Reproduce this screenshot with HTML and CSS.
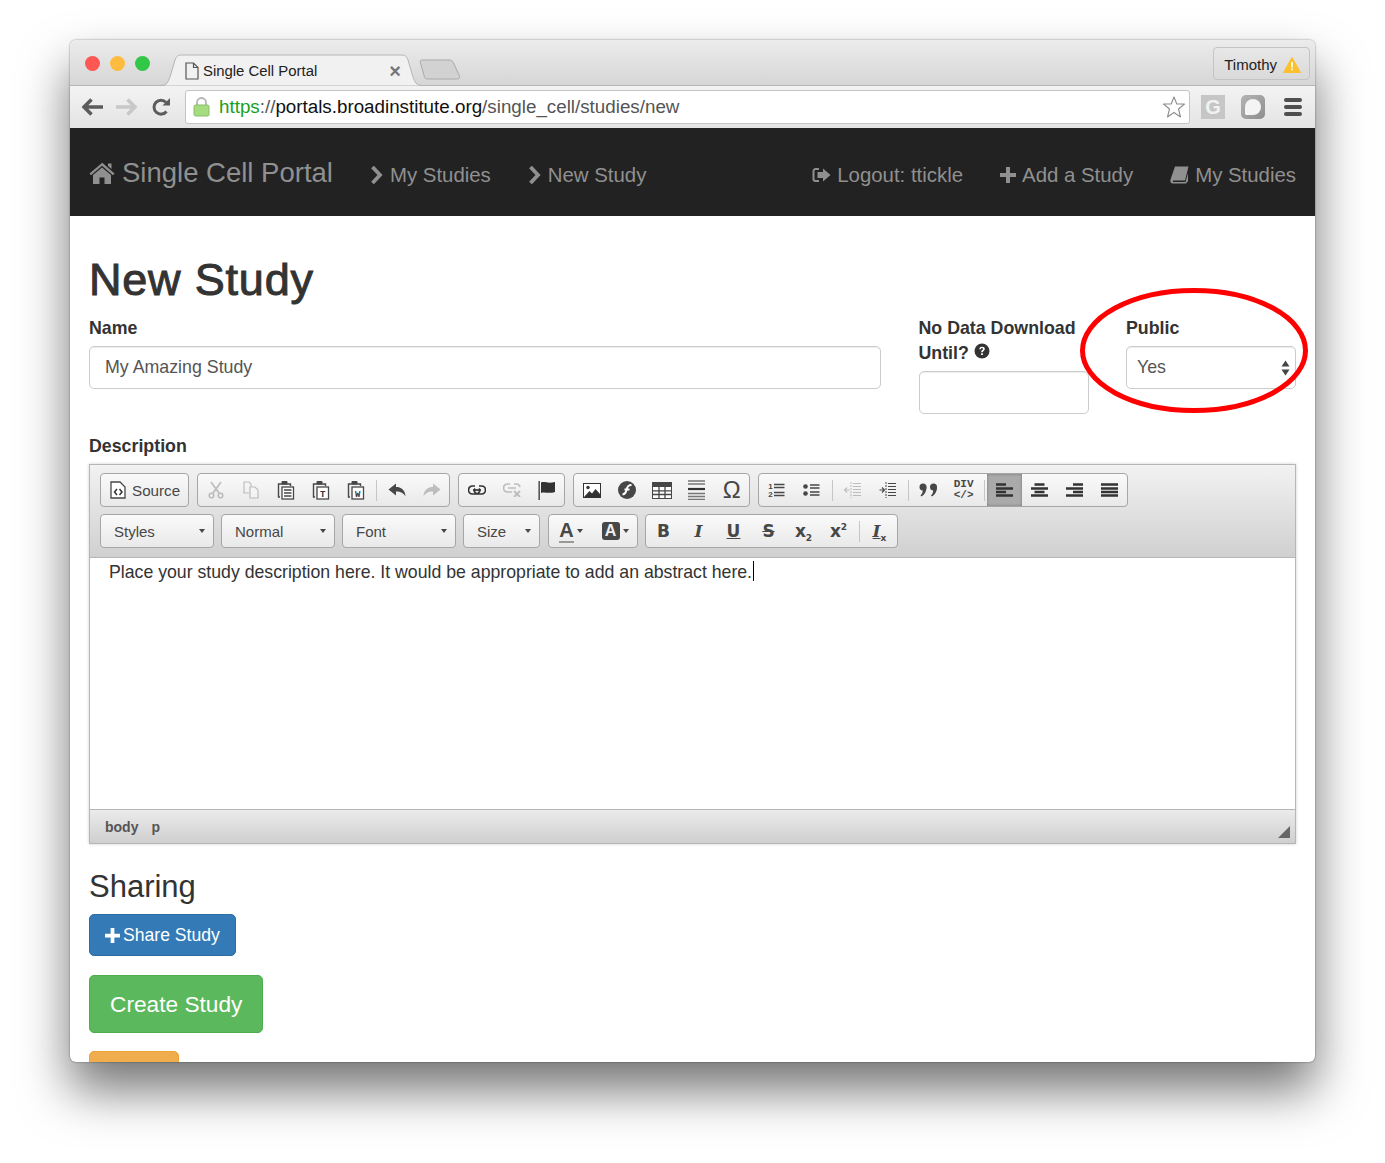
FILE: index.html
```html
<!DOCTYPE html>
<html lang="en">
<head>
    <meta charset="UTF-8">
    <title>Single Cell Portal</title>
    <link rel="stylesheet" href="styles.css">
</head>
<body>
<div class="window">
    <!-- browser chrome -->
    <div class="tabstrip">
        <div class="lights">
            <span class="light red"></span>
            <span class="light yellow"></span>
            <span class="light green"></span>
        </div>
        <div class="tab">
            <svg class="tab-shape" width="262" height="32" viewBox="0 0 262 32"><path d="M0 31.500C6 31.500 7 28 9 23L14 6C15.500 2 17 1 21 1H240C244 1 245.500 2 247 6L252 23C254 28 255 31.500 262 31.500" fill="#f1f1f1" stroke="#b4b4b4"/></svg>
            <svg class="tab-doc" width="14" height="18" viewBox="0 0 14 18"><path d="M1 1H8.500L13 5.500V17H1ZM8.500 1V5.500H13" fill="none" stroke="#555" stroke-width="1.200"/></svg>
            <span class="tab-title">Single Cell Portal</span>
            <span class="tab-close">×</span>
        </div>
        <svg class="newtab" width="42" height="21" viewBox="0 0 42 21"><path d="M1 2.500C1 1.500 2 1 3 1H30C32 1 33 1.500 34 3L40.500 17C41 19 40 20 38 20H9C7 20 6 19.500 5.500 18Z" fill="#d2d2d2" stroke="#aaa"/></svg>
        <div class="profile">Timothy
            <svg width="18" height="16" viewBox="0 0 18 16"><path d="M9 0.500L17.500 15.500H0.500Z" fill="#fbc02d" stroke="#fbc02d" stroke-linejoin="round"/><rect x="8.200" y="5" width="1.600" height="5.500" fill="#fff"/><rect x="8.200" y="11.500" width="1.600" height="1.800" fill="#fff"/></svg>
        </div>
    </div>
    <div class="urlbar">
        <svg class="nav-ico" width="22" height="18" viewBox="0 0 22 18"><path d="M9.500 1.500L2 9L9.500 16.500M2.500 9H21" fill="none" stroke="#5c5c5c" stroke-width="3.600"/></svg>
        <svg class="nav-ico fwd" width="22" height="18" viewBox="0 0 22 18"><path d="M12.500 1.500L20 9L12.500 16.500M19.500 9H1" fill="none" stroke="#c8c8c8" stroke-width="3.600"/></svg>
        <svg class="nav-ico reload" width="20" height="20" viewBox="0 0 20 20"><path d="M15.500 14.500A7 7 0 1 1 15 5.200" fill="none" stroke="#5c5c5c" stroke-width="3"/><path d="M11.500 8.500H19V1Z" fill="#5c5c5c"/></svg>
        <div class="omnibox">
            <svg width="17" height="20" viewBox="0 0 17 20"><path d="M4 9V5.500A4.500 4.500 0 0 1 13 5.500V9" fill="none" stroke="#b5b5b5" stroke-width="1.800"/><rect x="1" y="8" width="15" height="11" rx="1.500" fill="#a5dc7f" stroke="#8cbc6a"/></svg>
            <span class="url"><span class="url-green">https</span><span class="url-grey">://</span>portals.broadinstitute.org<span class="url-grey">/single_cell/studies/new</span></span>
            <svg class="star" width="24" height="24" viewBox="0 0 24 24"><path d="M12 2L14.800 9H22.500L16.500 14L18.500 22L12 17.500L5.500 22L7.500 14L1.500 9H9.200Z" fill="#fff" stroke="#8e8e8e" stroke-width="1.100" stroke-linejoin="round"/></svg>
        </div>
        <div class="ext-g">G</div>
        <div class="ext-round"><span></span></div>
        <div class="burger"><i></i><i></i><i></i></div>
    </div>

    <!-- site nav -->
    <nav class="navbar">
        <a class="brand">
            <svg width="26" height="22" viewBox="0 0 26 22"><path d="M13 0.500L25.500 11.500L24 13.300L13 3.800L2 13.300L0.500 11.500L13 1V0.500ZM19 1.500H22.500V7L19 4Z" fill="#909090"/><path d="M13 5.500L22 13V22H15.500V15.500H10.500V22H4V13Z" fill="#909090"/></svg>
            Single Cell Portal
        </a>
        <a class="nav-link crumb"><svg width="13" height="20" viewBox="0 0 13 20"><path d="M2.500 2L10 10L2.500 18" fill="none" stroke="#909090" stroke-width="3.800"/></svg>My Studies</a>
        <a class="nav-link crumb"><svg width="13" height="20" viewBox="0 0 13 20"><path d="M2.500 2L10 10L2.500 18" fill="none" stroke="#909090" stroke-width="3.800"/></svg>New Study</a>
        <div class="nav-right">
            <a class="nav-link"><svg width="19" height="16" viewBox="0 0 19 16"><path d="M7 2H3.500A2 2 0 0 0 1.500 4V12A2 2 0 0 0 3.500 14H7" fill="none" stroke="#909090" stroke-width="2"/><path d="M11 1.500L18.500 8L11 14.500V11H5.500V5H11Z" fill="#909090"/></svg>Logout: ttickle</a>
            <a class="nav-link"><svg width="16" height="16" viewBox="0 0 16 16"><path d="M6 0H10V6H16V10H10V16H6V10H0V6H6Z" fill="#909090"/></svg>Add a Study</a>
            <a class="nav-link"><svg width="19" height="18" viewBox="0 0 19 18"><path d="M5 0.500H18.500L15 14.500H3.500C2.500 14.500 2.500 16 3.500 16H15.500L18 7V15L16 17.500H3C0.500 17.500 0 15.500 0.500 13.500Z" fill="#909090"/></svg>My Studies</a>
        </div>
    </nav>

    <!-- page -->
    <main class="content">
        <h1>New Study</h1>
        <div class="form-row">
            <div class="field">
                <label>Name</label>
                <input type="text" value="My Amazing Study">
            </div>
            <div class="field">
                <label>No Data Download Until? <svg width="16" height="16" viewBox="0 0 16 16"><circle cx="8" cy="8" r="7.500" fill="#333"/><path d="M5.300 6.200C5.300 4.500 6.500 3.700 8 3.700C9.700 3.700 10.800 4.600 10.800 6C10.800 7.800 8.800 7.800 8.800 9.300H7.100C7.100 7.100 9 7.200 9 6C9 5.400 8.600 5.100 8 5.100C7.400 5.100 7 5.500 7 6.200ZM7.100 10.200H8.900V12.100H7.100Z" fill="#fff"/></svg></label>
                <input type="text">
            </div>
            <div class="field">
                <label>Public</label>
                <div class="select">Yes
                    <svg width="9" height="16" viewBox="0 0 9 16"><path d="M4.500 0.500L8.500 6.500H0.500ZM4.500 15.500L0.500 9.500H8.500Z" fill="#444"/></svg>
                </div>
            </div>
        </div>

        <label class="desc-label">Description</label>
        <div class="editor">
            <div class="ck-top">
                <div class="ck-row">
                    <div class="ck-group">
                        <div class="ck-btn ck-source">
                            <svg width="16" height="18" viewBox="0 0 16 18"><path d="M1 1H10L15 6V17H1Z" fill="#fff" stroke="#474747" stroke-width="1.300"/><path d="M7 8L4.500 11L7 14M9.500 8L12 11L9.500 14" fill="none" stroke="#333" stroke-width="1.500"/></svg>
                            Source
                        </div>
                    </div>
                    <div class="ck-group">
                        <div class="ck-btn off"><svg width="18" height="18" viewBox="0 0 18 18"><path d="M4 1L12 12M14 1L6 12" stroke="#474747" stroke-width="1.800" fill="none"/><circle cx="4.500" cy="14.500" r="2.300" fill="none" stroke="#474747" stroke-width="1.500"/><circle cx="13.500" cy="14.500" r="2.300" fill="none" stroke="#474747" stroke-width="1.500"/></svg></div>
                        <div class="ck-btn off"><svg width="18" height="18" viewBox="0 0 18 18"><path d="M7 12H2V1H7L9 3V6" fill="none" stroke="#474747" stroke-width="1.200"/><path d="M8 6H13L16 9V17H8Z" fill="#fff" stroke="#474747" stroke-width="1.200"/></svg></div>
                        <div class="ck-btn"><svg width="18" height="20" viewBox="0 0 18 20"><path d="M3 17H1.500V4H13.500V6" fill="none" stroke="#474747" stroke-width="1.400"/><rect x="4.500" y="1" width="6" height="3.500" rx="1" fill="#474747"/><rect x="5" y="7" width="11.500" height="12" fill="#fff" stroke="#474747" stroke-width="1.300"/><path d="M7 10H14.500M7 13H14.500M7 16H14.500" stroke="#474747" stroke-width="1.300"/></svg></div>
                        <div class="ck-btn"><svg width="18" height="20" viewBox="0 0 18 20"><path d="M3 17H1.500V4H13.500V6" fill="none" stroke="#474747" stroke-width="1.400"/><rect x="4.500" y="1" width="6" height="3.500" rx="1" fill="#474747"/><rect x="5" y="7" width="11.500" height="12" fill="#fff" stroke="#474747" stroke-width="1.300"/><text x="10.700" y="17" class="ico-text">T</text></svg></div>
                        <div class="ck-btn"><svg width="18" height="20" viewBox="0 0 18 20"><path d="M3 17H1.500V4H13.500V6" fill="none" stroke="#474747" stroke-width="1.400"/><rect x="4.500" y="1" width="6" height="3.500" rx="1" fill="#474747"/><rect x="5" y="7" width="11.500" height="12" fill="#fff" stroke="#474747" stroke-width="1.300"/><text x="10.700" y="17" class="ico-text">W</text></svg></div>
                        <span class="ck-sep"></span>
                        <div class="ck-btn"><svg width="18" height="14" viewBox="0 0 18 14"><path d="M8 0.500V4C13 4 17 6.500 17.500 13.500C15.500 10 13 8.500 8 8.500V12.500L0.500 6.500Z" fill="#474747"/></svg></div>
                        <div class="ck-btn off"><svg width="18" height="14" viewBox="0 0 18 14"><path d="M10 0.500V4C5 4 1 6.500 0.500 13.500C2.500 10 5 8.500 10 8.500V12.500L17.500 6.500Z" fill="#474747"/></svg></div>
                    </div>
                    <div class="ck-group">
                        <div class="ck-btn"><svg width="18" height="10" viewBox="0 0 18 10"><path d="M7 1H4.500A4 4 0 0 0 4.500 9H8.500A3.500 3.500 0 0 0 11 3.500M11 1H13.500A4 4 0 0 1 13.500 9H9.500A3.500 3.500 0 0 1 7 3.500" fill="none" stroke="#333" stroke-width="1.700"/><path d="M5 5H13" stroke="#333" stroke-width="1.700"/></svg></div>
                        <div class="ck-btn off"><svg width="18" height="14" viewBox="0 0 18 14"><path d="M7 1H4.500A4 4 0 0 0 4.500 9H9M11 1H13.500A4 4 0 0 1 17 4M5 5H13" fill="none" stroke="#474747" stroke-width="1.700"/><path d="M11 8L17 14M17 8L11 14" stroke="#474747" stroke-width="1.800"/></svg></div>
                        <div class="ck-btn"><svg width="18" height="19" viewBox="0 0 18 19"><rect x="0.500" y="0" width="1.300" height="19" fill="#333"/><path d="M3 1.500C7 0 9.500 3 17 1V11C10 13 7 10.500 3 12Z" fill="#333"/></svg></div>
                    </div>
                    <div class="ck-group">
                        <div class="ck-btn"><svg width="18" height="15" viewBox="0 0 18 15"><rect x="0.500" y="0.500" width="17" height="14" fill="#fff" stroke="#333"/><circle cx="5" cy="4.500" r="1.700" fill="#333"/><path d="M1 14L6.500 8L9 10.500L12.500 6L17 11V14Z" fill="#333"/></svg></div>
                        <div class="ck-btn"><svg width="18" height="18" viewBox="0 0 18 18"><circle cx="9" cy="9" r="9" fill="#474747"/><path d="M13.500 4C9.500 4 9 6.500 8.500 9C8 11.500 7.500 13 4.500 13.500M6.500 8.500H11.500" fill="none" stroke="#fff" stroke-width="2"/></svg></div>
                        <div class="ck-btn"><svg width="20" height="17" viewBox="0 0 20 17"><rect width="20" height="17" fill="#474747"/><path d="M1 5H19V16H1Z" fill="#fff"/><path d="M7 5V17M13 5V17M0 8.800H20M0 12.500H20" stroke="#474747" stroke-width="1.300"/></svg></div>
                        <div class="ck-btn"><svg width="17" height="20" viewBox="0 0 17 20"><path d="M0 1H17M0 4H17M0 13.500H17M0 16.500H17M0 19.500H17" stroke="#777" stroke-width="1.300"/><path d="M0 9H17" stroke="#333" stroke-width="2.200"/></svg></div>
                        <div class="ck-btn ck-omega">Ω</div>
                    </div>
                    <div class="ck-group">
                        <div class="ck-btn"><svg width="17" height="16" viewBox="0 0 17 16"><text x="2.500" y="7" class="ico-num">1</text><text x="2.500" y="15" class="ico-num">2</text><path d="M6 2.500H16.500M6 5.500H16.500M6 10.500H16.500M6 13.500H16.500" stroke="#474747" stroke-width="1.400"/></svg></div>
                        <div class="ck-btn"><svg width="17" height="14" viewBox="0 0 17 14"><circle cx="2.500" cy="3.500" r="2.300" fill="#474747"/><circle cx="2.500" cy="10.500" r="2.300" fill="#474747"/><path d="M7 2H16.500M7 5H16.500M7 9H16.500M7 12H16.500" stroke="#474747" stroke-width="1.400"/></svg></div>
                        <span class="ck-sep"></span>
                        <div class="ck-btn off"><svg width="18" height="16" viewBox="0 0 18 16"><path d="M7 0V16" stroke="#474747" stroke-dasharray="2 1"/><path d="M9 1.500H17M9 4.500H17M9 7.500H17M9 10.500H17M9 13.500H17" stroke="#474747" stroke-width="1.100"/><path d="M5.500 8H0.500M3 5.500L0.500 8L3 10.500" fill="none" stroke="#474747" stroke-width="1.100"/></svg></div>
                        <div class="ck-btn"><svg width="18" height="16" viewBox="0 0 18 16"><path d="M7 0V16" stroke="#474747" stroke-dasharray="2 1"/><path d="M9 1.500H17M9 4.500H17M9 7.500H17M9 10.500H17M9 13.500H17" stroke="#474747" stroke-width="1.100"/><path d="M0.500 8H5.500M3 5.500L5.500 8L3 10.500" fill="none" stroke="#474747" stroke-width="1.100"/></svg></div>
                        <span class="ck-sep"></span>
                        <div class="ck-btn"><svg width="19" height="14" viewBox="0 0 19 14"><circle cx="4" cy="4" r="3.500" fill="#474747"/><path d="M7.500 4C7.500 8 6 11.500 2.500 13.500L1.500 12.500C3.500 10.500 4 8.500 3.500 6Z" fill="#474747"/><circle cx="14.500" cy="4" r="3.500" fill="#474747"/><path d="M18 4C18 8 16.500 11.500 13 13.500L12 12.500C14 10.500 14.500 8.500 14 6Z" fill="#474747"/></svg></div>
                        <div class="ck-btn ck-div"><span>DIV</span><span>&lt;/&gt;</span></div>
                        <span class="ck-sep"></span>
                        <div class="ck-btn active"><svg width="17" height="14" viewBox="0 0 17 14"><path d="M0 1.500H10M0 5.500H17M0 9H10M0 12.500H17" stroke="#333" stroke-width="2.500"/></svg></div>
                        <div class="ck-btn"><svg width="17" height="14" viewBox="0 0 17 14"><path d="M3.500 1.500H13.500M0 5.500H17M3.500 9H13.500M0 12.500H17" stroke="#333" stroke-width="2.500"/></svg></div>
                        <div class="ck-btn"><svg width="17" height="14" viewBox="0 0 17 14"><path d="M7 1.500H17M0 5.500H17M7 9H17M0 12.500H17" stroke="#333" stroke-width="2.500"/></svg></div>
                        <div class="ck-btn"><svg width="17" height="14" viewBox="0 0 17 14"><path d="M0 1.500H17M0 5.500H17M0 9H17M0 12.500H17" stroke="#333" stroke-width="2.500"/></svg></div>
                    </div>
                </div>
                <div class="ck-row row-two">
                    <div class="ck-group ck-combo w-styles">Styles<i class="caret"></i></div>
                    <div class="ck-group ck-combo w-styles">Normal<i class="caret"></i></div>
                    <div class="ck-group ck-combo w-styles">Font<i class="caret"></i></div>
                    <div class="ck-group ck-combo w-size">Size<i class="caret"></i></div>
                    <div class="ck-group ck-colors">
                        <div class="ck-btn ck-color"><span class="ck-a">A</span><i class="caret"></i></div>
                        <div class="ck-btn ck-color"><span class="ck-a-bg">A</span><i class="caret"></i></div>
                    </div>
                    <div class="ck-group">
                        <div class="ck-btn ck-glyph"><b>B</b></div>
                        <div class="ck-btn ck-glyph"><b class="slab">I</b></div>
                        <div class="ck-btn ck-glyph ck-u"><b>U</b></div>
                        <div class="ck-btn ck-glyph ck-s"><b>S</b></div>
                        <div class="ck-btn ck-glyph"><b>x<sub>2</sub></b></div>
                        <div class="ck-btn ck-glyph"><b>x<sup>2</sup></b></div>
                        <span class="ck-sep"></span>
                        <div class="ck-btn ck-glyph"><b class="slab ck-u">I</b><b><sub>x</sub></b></div>
                    </div>
                </div>
            </div>
            <div class="ck-body">Place your study description here. It would be appropriate to add an abstract here.<span class="cursor"></span></div>
            <div class="ck-bottom">
                <span>body</span><span>p</span>
                <i class="resizer"></i>
            </div>
        </div>

        <h3>Sharing</h3>
        <a class="btn btn-share"><svg width="15" height="15" viewBox="0 0 16 16"><path d="M6 0H10V6H16V10H10V16H6V10H0V6H6Z" fill="#fff"/></svg> Share Study</a>
        <a class="btn btn-create">Create Study</a>
        <a class="btn btn-orange"></a>
    </main>

    <!-- annotation on top of the select -->
    <svg class="circle" width="232" height="131" viewBox="0 0 232 131"><ellipse cx="116" cy="65.500" rx="111.500" ry="60" fill="none" stroke="#f00" stroke-width="5"/></svg>
</div>
</body>
</html>
```

FILE: styles.css
```css
* {
    box-sizing: border-box;
}
html, body {
    margin: 0;
    height: 1163px;
    overflow: hidden;
    background: #fff;
}
body {
    padding: 40px 0 0 70px;
    font-family: "Liberation Sans", Arial, sans-serif;
    color: #333;
}
.window {
    position: relative;
    width: 1245px;
    height: 1022px;
    background: #fff;
    border-radius: 6px;
    box-shadow: 0 28px 50px rgba(0, 0, 0, 0.55), 0 0 2px rgba(0, 0, 0, 0.5);
}

/* browser chrome */
.tabstrip {
    display: flex;
    align-items: flex-end;
    height: 46px;
    padding-left: 15px;
    background: linear-gradient(#ececec, #d6d6d6);
    border-bottom: 1px solid #b4b4b4;
    border-radius: 6px 6px 0 0;
}
.lights {
    display: flex;
    gap: 10px;
    align-self: flex-start;
    margin-top: 16px;
}
.light {
    width: 15px;
    height: 15px;
    border-radius: 50%;
}
.red { background: #fc5753; }
.yellow { background: #fdbc40; }
.green { background: #33c748; }
.tab {
    position: relative;
    display: flex;
    align-items: center;
    width: 262px;
    height: 32px;
    margin: 0 0 -1px 11px;
    padding: 2px 22px 0 24px;
}
.tab-shape {
    position: absolute;
    left: 0;
    top: 0;
}
.tab-doc, .tab-title, .tab-close {
    position: relative;
}
.tab-title {
    margin-left: 4px;
    font-size: 14.900px;
    color: #222;
}
.tab-close {
    margin-left: auto;
    font-size: 20px;
    font-weight: bold;
    color: #777;
}
.newtab {
    margin: 0 0 5px -4px;
}
.profile {
    display: flex;
    align-items: center;
    gap: 6px;
    align-self: flex-start;
    height: 33px;
    margin: 7px 5px 0 auto;
    padding: 2px 8px 0 10px;
    font-size: 15px;
    color: #222;
    border: 1px solid #c4c4c4;
    border-radius: 4px;
}
.urlbar {
    display: flex;
    align-items: center;
    height: 42px;
    padding-left: 12px;
    background: linear-gradient(#f3f3f3, #e4e4e4);
}
.nav-ico {
    flex: none;
}
.fwd {
    margin-left: 11px;
}
.reload {
    margin-left: 14px;
}
.omnibox {
    display: flex;
    align-items: center;
    width: 1005px;
    height: 34px;
    margin-left: 14px;
    padding: 0 3px 0 7px;
    background: #fff;
    border: 1px solid #c4c4c4;
    border-radius: 3px;
}
.url {
    margin-left: 9px;
    font-size: 18.800px;
    color: #111;
    white-space: nowrap;
}
.url-green { color: #17a11c; }
.url-grey { color: #555; }
.star {
    margin-left: auto;
}
.ext-g {
    display: flex;
    align-items: center;
    justify-content: center;
    width: 24px;
    height: 24px;
    margin-left: 11px;
    background: #c6c6c6;
    color: #f2f2f2;
    font-size: 20px;
    font-weight: bold;
}
.ext-round {
    width: 24px;
    height: 24px;
    margin-left: 16px;
    padding: 4px;
    background: linear-gradient(135deg, #b4b4b4, #8e8e8e);
    border-radius: 5px;
}
.ext-round span {
    display: block;
    width: 16px;
    height: 16px;
    background: #f4f4f4;
    border-radius: 50% 50% 50% 10%;
}
.burger {
    display: flex;
    flex-direction: column;
    gap: 3px;
    margin-left: 19px;
}
.burger i {
    display: block;
    width: 18px;
    height: 4px;
    background: #4f4f4f;
    border-radius: 2px;
}

/* site nav */
.navbar {
    display: flex;
    align-items: center;
    height: 88px;
    padding: 6px 19px 0;
    background: #222;
    color: #909090;
}
.brand {
    display: flex;
    align-items: center;
    gap: 7px;
    font-size: 27.500px;
    margin-top: -4px;
}
.nav-link {
    display: flex;
    align-items: center;
    gap: 6px;
    font-size: 20.400px;
}
.crumb {
    margin-left: 37px;
    gap: 7px;
}
.nav-right {
    display: flex;
    gap: 37px;
    margin-left: auto;
}

/* page */
.content {
    padding: 36px 19px 0;
    height: 846px;
    overflow: hidden;
}
h1 {
    margin: 0 0 8px;
    font-size: 45px;
    line-height: 56px;
    font-weight: normal;
    letter-spacing: 0.800px;
    -webkit-text-stroke: 1px #333;
    color: #333;
}
h3 {
    margin: 26px 0 10px;
    font-size: 31px;
    line-height: 34px;
    font-weight: normal;
}
label {
    display: block;
    font-size: 17.800px;
    font-weight: bold;
    line-height: 25px;
    margin-bottom: 5px;
}
.form-row {
    display: grid;
    grid-template-columns: 792px 170px 170px;
    column-gap: 37.500px;
}
input, .select {
    display: block;
    width: 100%;
    height: 43px;
    padding: 0 15px;
    font: 17.800px "Liberation Sans", Arial, sans-serif;
    color: #555;
    background: #fff;
    border: 1px solid #ccc;
    border-radius: 5px;
    box-shadow: inset 0 1px 1px rgba(0, 0, 0, 0.075);
}
.select {
    display: flex;
    align-items: center;
    justify-content: space-between;
    padding: 0 5px 0 10px;
}
.desc-label {
    margin: 20px 0 5px;
}

/* editor toolbar */
.editor {
    height: 380px;
    border: 1px solid #b6b6b6;
    box-shadow: 0 0 3px rgba(0, 0, 0, 0.2);
}
.ck-top {
    height: 93px;
    padding: 8px 10px 0;
    background: linear-gradient(#f2f2f2, #d0d0d0);
    border-bottom: 1px solid #b6b6b6;
}
.ck-row {
    display: flex;
    gap: 8px;
    height: 34px;
    margin-bottom: 7px;
}
.row-two {
    gap: 7px;
}
.ck-colors {
    margin-left: 1px;
}
.ck-group {
    display: flex;
    align-items: stretch;
    height: 34px;
    background: linear-gradient(#fafafa, #e9e9e9);
    border: 1px solid #a6a6a6;
    border-radius: 4px;
}
.ck-btn {
    display: flex;
    align-items: center;
    justify-content: center;
    width: 35px;
    font-size: 15px;
    color: #474747;
}
.ck-btn.off svg {
    opacity: 0.3;
}
.ck-btn.active {
    background: #aaa;
    box-shadow: inset 0 0 3px #777;
}
.ck-sep {
    width: 1px;
    margin: 6px 2.500px 5px;
    background: #c6c6c6;
}
.ck-source {
    width: auto;
    gap: 6px;
    padding: 0 8px 0 9px;
    font-size: 15.200px;
}
.ico-text {
    font: bold 9px "Liberation Mono", monospace;
    text-anchor: middle;
    fill: #333;
}
.ico-num {
    font: bold 8px "Liberation Sans", sans-serif;
    text-anchor: middle;
    fill: #474747;
}
.ck-glyph {
    font-family: "DejaVu Sans", sans-serif;
    font-size: 17px;
}
.ck-glyph sub, .ck-glyph sup {
    font-size: 9px;
    line-height: 0;
}
.slab {
    font-family: "DejaVu Serif", serif;
    font-style: italic;
}
.ck-omega {
    font-size: 24px;
}
.ck-u {
    text-decoration: underline;
}
.ck-s {
    text-decoration: line-through;
}
.ck-div {
    flex-direction: column;
    font: bold 11px/11px "Liberation Mono", monospace;
}
.ck-combo {
    justify-content: space-between;
    align-items: center;
    padding: 0 8px 0 13px;
    font-size: 15px;
    color: #474747;
}
.w-styles { width: 114px; }
.w-size { width: 77px; }
.caret {
    display: block;
    width: 0;
    height: 0;
    border: 3.500px solid transparent;
    border-top: 4px solid #474747;
    border-bottom: 0;
}
.ck-color {
    width: 44px;
    gap: 3px;
}
.ck-a {
    font-size: 20px;
    font-weight: bold;
    line-height: 22px;
    border-bottom: 2px solid #999;
}
.ck-a-bg {
    width: 18px;
    font-size: 16px;
    font-weight: bold;
    line-height: 18px;
    text-align: center;
    color: #eee;
    background: #474747;
    border-radius: 3px;
}
.ck-body {
    height: 251px;
    padding: 3px 19px;
    font-size: 17.700px;
    line-height: 22px;
    color: #333;
    background: #fff;
}
.cursor {
    display: inline-block;
    width: 1px;
    height: 20px;
    margin-left: 1px;
    vertical-align: -3px;
    background: #000;
}
.ck-bottom {
    position: relative;
    display: flex;
    align-items: center;
    gap: 13px;
    height: 34px;
    padding-left: 15px;
    font-size: 14px;
    font-weight: bold;
    color: #555;
    background: linear-gradient(#ebebeb, #cfcfcf);
    border-top: 1px solid #b6b6b6;
}
.resizer {
    position: absolute;
    right: 5px;
    bottom: 5px;
    border-left: 12px solid transparent;
    border-bottom: 12px solid #666;
}

/* buttons */
.btn {
    display: flex;
    align-items: center;
    width: fit-content;
    color: #fff;
    border-radius: 5px;
}
.btn-share {
    gap: 3px;
    height: 42px;
    padding: 0 15px;
    font-size: 17.600px;
    background: #337ab7;
    border: 1px solid #2e6da4;
}
.btn-create {
    height: 58px;
    margin-top: 19px;
    padding: 0 20px;
    font-size: 22.700px;
    background: #5cb85c;
    border: 1px solid #4cae4c;
}
.btn-orange {
    width: 90px;
    height: 40px;
    margin-top: 18px;
    background: #f0ad4e;
    border: 1px solid #eea236;
}

/* red annotation */
.circle {
    position: absolute;
    left: 1008px;
    top: 245px;
}
```
